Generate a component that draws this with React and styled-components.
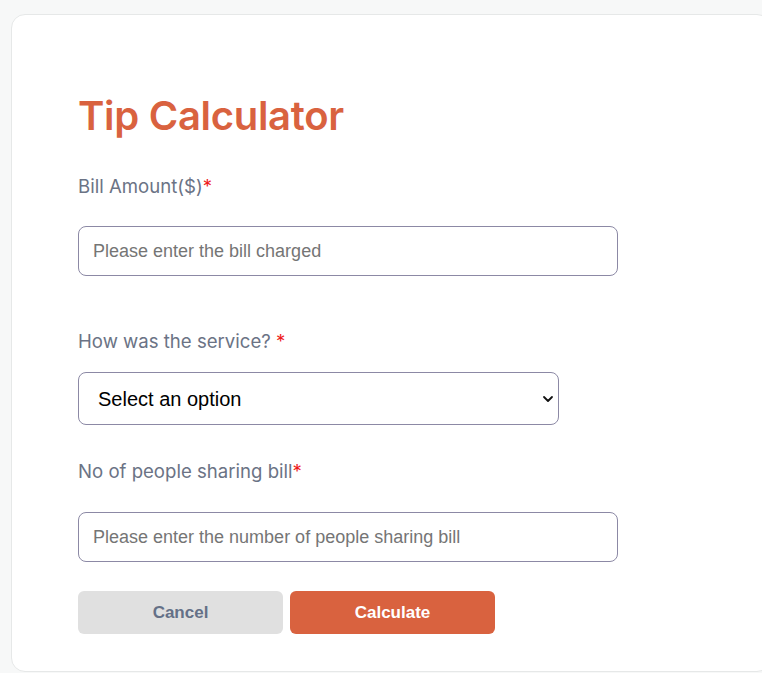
import React from "react";
import styled, { createGlobalStyle } from "styled-components";

const GlobalStyle = createGlobalStyle`
  html, body {
    margin: 0;
    padding: 0;
    background: #f7f8f8;
  }
  * {
    box-sizing: border-box;
  }
`;

const Page = styled.div`
  width: 762px;
  height: 673px;
  padding: 14px 0 0 11px;
  overflow: hidden;
`;

const Card = styled.div`
  width: 760px;
  height: 658px;
  background: white;
  border: 1px solid #e6e8e8;
  border-radius: 14px;
  padding: 77px 0 0 66px;
  display: flex;
  flex-direction: column;
  align-items: flex-start;
`;

const Title = styled.h1`
  margin: 0 0 34px;
  font-family: "Inter", "Open Sans", sans-serif;
  font-size: 40px;
  font-weight: 600;
  line-height: 48px;
  letter-spacing: -0.3px;
  color: #d9623f;
`;

const Field = styled.div`
  display: flex;
  flex-direction: column;
  margin-bottom: ${(p) => p.gap || "0px"};
`;

const Label = styled.label`
  font-family: "Inter", "Liberation Sans", sans-serif;
  font-size: 18.6px;
  line-height: 24px;
  color: #6b7385;
  margin-bottom: ${(p) => p.space || "28px"};
`;

const Required = styled.span`
  color: #ee1c1c;
`;

const TextInput = styled.input`
  width: 540px;
  height: 50px;
  border: 1px solid #8c89a5;
  border-radius: 8px;
  padding: 0 14px;
  font-family: "Liberation Sans", Arial, sans-serif;
  font-size: 18px;
  color: #222;
  outline: none;
  &::placeholder {
    color: #757575;
  }
`;

const SelectWrap = styled.div`
  position: relative;
  width: 481px;
`;

const Select = styled.select`
  appearance: none;
  width: 100%;
  height: 53px;
  border: 1px solid #8c89a5;
  border-radius: 8px;
  padding: 0 19px;
  background: white;
  font-family: "Liberation Sans", Arial, sans-serif;
  font-size: 20px;
  color: #000;
  outline: none;
`;

const Chevron = styled.svg`
  position: absolute;
  right: 5px;
  top: 21px;
  pointer-events: none;
`;

const Buttons = styled.div`
  display: flex;
  gap: 7px;
`;

const Button = styled.button`
  width: 205px;
  height: 43px;
  border: none;
  border-radius: 6px;
  font-family: "Liberation Sans", Arial, sans-serif;
  font-size: 17px;
  font-weight: 700;
  cursor: pointer;
  background: ${(p) => (p.primary ? "#d9623f" : "#e0e0e0")};
  color: ${(p) => (p.primary ? "#ffffff" : "#647087")};
`;

export default function App() {
  return (
    <Page>
      <GlobalStyle />
      <Card>
        <Title>Tip Calculator</Title>

        <Field gap="53px">
          <Label>
            Bill Amount($)<Required>*</Required>
          </Label>
          <TextInput placeholder="Please enter the bill charged" />
        </Field>

        <Field gap="34px">
          <Label space="19px">
            How was the service? <Required>*</Required>
          </Label>
          <SelectWrap>
            <Select defaultValue="">
              <option value="">Select an option</option>
              <option value="30">Outstanding (30%)</option>
              <option value="20">Good (20%)</option>
              <option value="15">It was OK (15%)</option>
              <option value="10">Bad (10%)</option>
              <option value="5">Terrible (5%)</option>
            </Select>
            <Chevron width="12" height="12" viewBox="0 0 12 12">
              <path d="M2 4 L6 8 L10 4" fill="none" stroke="#111" strokeWidth="1.8" strokeLinecap="round" strokeLinejoin="round" />
            </Chevron>
          </SelectWrap>
        </Field>

        <Field gap="29px">
          <Label space="29px">
            No of people sharing bill<Required>*</Required>
          </Label>
          <TextInput placeholder="Please enter the number of people sharing bill" />
        </Field>

        <Buttons>
          <Button>Cancel</Button>
          <Button primary>Calculate</Button>
        </Buttons>
      </Card>
    </Page>
  );
}
